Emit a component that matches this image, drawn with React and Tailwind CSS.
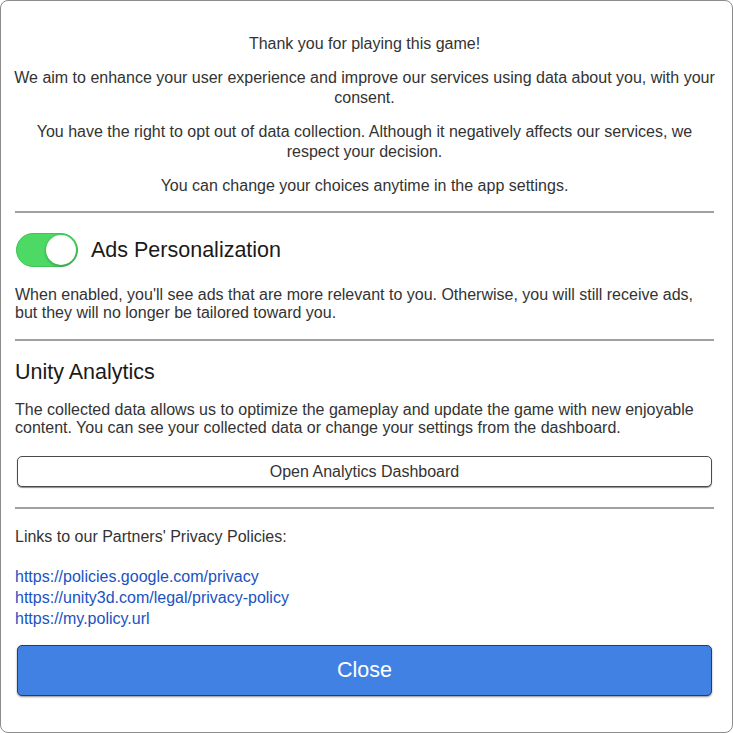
import React, { useState } from "react";

const font = { fontFamily: '"Liberation Sans", Arial, sans-serif' };

function Divider() {
  return <div className="h-[2px] bg-[#a0a0a0]" />;
}

function Toggle({ on, onChange }) {
  return (
    <button
      onClick={() => onChange(!on)}
      className={
        on
          ? "relative h-[34px] w-[62px] shrink-0 rounded-full border border-[#3fc457] bg-[#4cd964]"
          : "relative h-[34px] w-[62px] shrink-0 rounded-full border border-[#d0d0d0] bg-white"
      }
    >
      <span
        className={
          on
            ? "absolute right-[1px] top-[1px] h-[30px] w-[30px] rounded-full bg-white shadow-[0_1px_3px_rgba(0,0,0,0.35)]"
            : "absolute left-[1px] top-[1px] h-[30px] w-[30px] rounded-full bg-white shadow-[0_1px_3px_rgba(0,0,0,0.35)]"
        }
      />
    </button>
  );
}

export default function App() {
  const [ads, setAds] = useState(true);

  return (
    <div className="h-[733px] w-[733px] bg-white" style={font}>
      <div className="flex h-full flex-col rounded-lg border border-[#8c8c8c] bg-white pl-[14px] pr-[18px] pt-[33px] text-[16px] text-[#333]">
        <div className="-mx-[3px] flex flex-col gap-[14px] text-center leading-[20px]">
          <p>Thank you for playing this game!</p>
          <p>
            We aim to enhance your user experience and improve our services using data about you, with your
            consent.
          </p>
          <p>
            You have the right to opt out of data collection. Although it negatively affects our services, we
            respect your decision.
          </p>
          <p>You can change your choices anytime in the app settings.</p>
        </div>

        <div className="mt-[15px]">
          <Divider />
        </div>

        <div className="mt-[20px] flex items-center gap-[13px] pl-[1px]">
          <Toggle on={ads} onChange={setAds} />
          <span className="text-[21.5px] text-[#1a1a1a]">Ads Personalization</span>
        </div>
        <p className="mt-[19px] leading-[18px]">
          When enabled, you'll see ads that are more relevant to you. Otherwise, you will still receive ads,
          but they will no longer be tailored toward you.
        </p>

        <div className="mt-[17px]">
          <Divider />
        </div>

        <h2 className="mt-[19px] text-[21.5px] leading-[24px] text-[#1a1a1a]">Unity Analytics</h2>
        <p className="mt-[17px] leading-[18px]">
          The collected data allows us to optimize the gameplay and update the game with new enjoyable
          content. You can see your collected data or change your settings from the dashboard.
        </p>
        <button className="mx-[2px] mt-[19px] h-[31px] rounded-[5px] border border-[#4a4a4a] bg-white text-[16px] text-[#333] shadow-[0_1px_1px_rgba(0,0,0,0.45)]">
          Open Analytics Dashboard
        </button>

        <div className="mt-[20px]">
          <Divider />
        </div>

        <p className="mt-[19px] leading-[18px]">Links to our Partners' Privacy Policies:</p>
        <div className="mt-[20px] flex flex-col leading-[21px] text-[#1a52c2]">
          <a href="#">https://policies.google.com/privacy</a>
          <a href="#">https://unity3d.com/legal/privacy-policy</a>
          <a href="#">https://my.policy.url</a>
        </div>

        <button className="mx-[2px] mt-[16px] h-[51px] rounded-[5px] border border-[#2b3c5c] bg-[#4181e3] text-[21.5px] text-white shadow-[0_1px_2px_rgba(0,0,0,0.45)]">
          Close
        </button>
      </div>
    </div>
  );
}
